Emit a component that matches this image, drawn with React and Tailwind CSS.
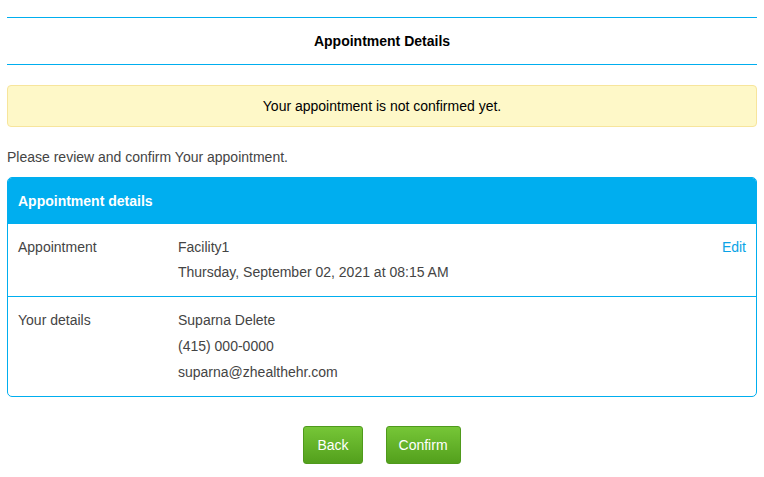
export default function App() {
  return (
    <div className="w-[764px] h-[477px] bg-white px-[7px] pt-[17px] text-[14px] text-[#444] font-['Liberation_Sans',Arial,sans-serif]">
      <div className="border-t border-b border-[#00aeef] h-[48px] flex items-center justify-center">
        <span className="font-bold text-black">Appointment Details</span>
      </div>
      <div className="mt-[20px] h-[42px] rounded-[4px] border border-[#f7e59c] bg-[#fef8c8] flex items-center justify-center text-black">
        Your appointment is not confirmed yet.
      </div>
      <div className="mt-[22px] leading-[16px]">Please review and confirm Your appointment.</div>
      <div className="mt-[12px] rounded-[5px] border border-[#00aeef] overflow-hidden">
        <div className="bg-[#00aeef] h-[46px] flex items-center px-[10px] text-white font-bold">Appointment details</div>
        <div className="flex px-[10px] pt-[11px] pb-[11px] border-b border-[#00aeef] leading-[25px]">
          <div className="w-[160px]">Appointment</div>
          <div className="flex-1">
            <div>Facility1</div>
            <div>Thursday, September 02, 2021 at 08:15 AM</div>
          </div>
          <div className="text-[#0aa3e6]">Edit</div>
        </div>
        <div className="flex px-[10px] pt-[10px] pb-[11px] leading-[26px]">
          <div className="w-[160px]">Your details</div>
          <div className="flex-1">
            <div>Suparna Delete</div>
            <div>(415) 000-0000</div>
            <div>suparna@zhealthehr.com</div>
          </div>
        </div>
      </div>
      <div className="mt-[29px] flex justify-center gap-[23px]">
        <button className="h-[38px] px-[13px] rounded-[3px] border border-[#4f9a1c] bg-gradient-to-b from-[#76c637] to-[#53a01c] text-white text-[14px]">Back</button>
        <button className="h-[38px] px-[12px] rounded-[3px] border border-[#4f9a1c] bg-gradient-to-b from-[#76c637] to-[#53a01c] text-white text-[14px]">Confirm</button>
      </div>
    </div>
  );
}
